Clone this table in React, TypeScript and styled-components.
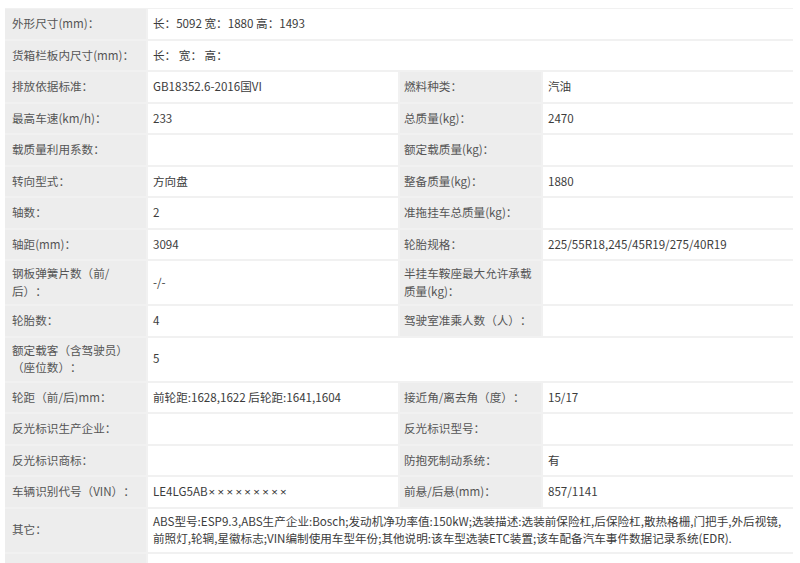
import React from "react";
import styled, { createGlobalStyle } from "styled-components";

const GlobalStyle = createGlobalStyle`
  html, body {
    margin: 0;
    padding: 0;
    background: #ffffff;
  }
  body {
    font-family: "Microsoft YaHei", "Noto Sans CJK SC", "Noto Sans", sans-serif;
  }
`;

const Page = styled.div`
  padding: 8px 7px 0 5px;
  width: 800px;
  height: 563px;
  box-sizing: border-box;
  overflow: hidden;
`;

const Sheet = styled.div`
  display: grid;
  grid-template-columns: 141px 250px 141px 250px;
  grid-auto-rows: minmax(29.5px, auto);
  gap: 2px;
  padding: 1px 0 0 0;
  background: #f1f1f1;
  width: 788px;
  box-sizing: border-box;
  font-size: 11.6px;
  line-height: 17.5px;
  text-spacing-trim: space-all;
`;

const Label = styled.div<{ $first?: boolean }>`
  background: #ededed;
  color: #555555;
  display: flex;
  align-items: center;
  padding: 4px 4px 4px ${(p) => (p.$first ? "7px" : "4px")};
`;

const Value = styled.div<{ $span?: number }>`
  background: #ffffff;
  color: #3c3c3c;
  display: flex;
  align-items: center;
  padding: 4px 5px;
  grid-column: span ${(p) => p.$span ?? 1};
`;

const Mask = styled.span`
  font-family: "Noto Sans", "DejaVu Sans", sans-serif;
  letter-spacing: 2.3px;
  margin-left: 1px;
`;

type Row =
  | { kind: "wide"; label: string; value: React.ReactNode }
  | { kind: "pair"; l1: string; v1: React.ReactNode; l2: string; v2: string };

const rows: Row[] = [
  { kind: "wide", label: "外形尺寸(mm)：", value: "长：5092 宽：1880 高：1493" },
  { kind: "wide", label: "货箱栏板内尺寸(mm)：", value: "长： 宽： 高：" },
  { kind: "pair", l1: "排放依据标准：", v1: "GB18352.6-2016国VI", l2: "燃料种类：", v2: "汽油" },
  { kind: "pair", l1: "最高车速(km/h)：", v1: "233", l2: "总质量(kg)：", v2: "2470" },
  { kind: "pair", l1: "载质量利用系数：", v1: "", l2: "额定载质量(kg)：", v2: "" },
  { kind: "pair", l1: "转向型式：", v1: "方向盘", l2: "整备质量(kg)：", v2: "1880" },
  { kind: "pair", l1: "轴数：", v1: "2", l2: "准拖挂车总质量(kg)：", v2: "" },
  { kind: "pair", l1: "轴距(mm)：", v1: "3094", l2: "轮胎规格：", v2: "225/55R18,245/45R19/275/40R19" },
  { kind: "pair", l1: "钢板弹簧片数（前/后）：", v1: "-/-", l2: "半挂车鞍座最大允许承载质量(kg)：", v2: "" },
  { kind: "pair", l1: "轮胎数：", v1: "4", l2: "驾驶室准乘人数（人）：", v2: "" },
  { kind: "wide", label: "额定载客（含驾驶员）（座位数）：", value: "5" },
  { kind: "pair", l1: "轮距（前/后)mm：", v1: "前轮距:1628,1622 后轮距:1641,1604", l2: "接近角/离去角（度）：", v2: "15/17" },
  { kind: "pair", l1: "反光标识生产企业：", v1: "", l2: "反光标识型号：", v2: "" },
  { kind: "pair", l1: "反光标识商标：", v1: "", l2: "防抱死制动系统：", v2: "有" },
  {
    kind: "pair",
    l1: "车辆识别代号（VIN）：",
    v1: (
      <span>
        LE4LG5AB<Mask>×××××××××</Mask>
      </span>
    ),
    l2: "前悬/后悬(mm)：",
    v2: "857/1141",
  },
  {
    kind: "wide",
    label: "其它：",
    value: (
      <span>
        ABS型号:ESP9.3,ABS生产企业:Bosch;发动机净功率值:150kW;选装描述:选装前保险杠,后保险杠,散热格栅,门把手,外后视镜,
        <br />
        前照灯,轮辋,星徽标志;VIN编制使用车型年份;其他说明:该车型选装ETC装置;该车配备汽车事件数据记录系统(EDR).
      </span>
    ),
  },
  { kind: "wide", label: "", value: "" },
];

export default function App() {
  return (
    <>
      <GlobalStyle />
      <Page>
        <Sheet>
          {rows.map((r, i) =>
            r.kind === "wide" ? (
              <React.Fragment key={i}>
                <Label $first>{r.label}</Label>
                <Value $span={3}>{r.value}</Value>
              </React.Fragment>
            ) : (
              <React.Fragment key={i}>
                <Label $first>{r.l1}</Label>
                <Value>{r.v1}</Value>
                <Label>{r.l2}</Label>
                <Value>{r.v2}</Value>
              </React.Fragment>
            )
          )}
        </Sheet>
      </Page>
    </>
  );
}
